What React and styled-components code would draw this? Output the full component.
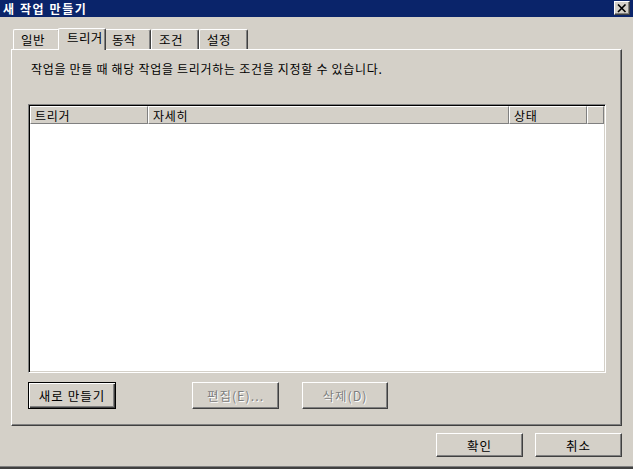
import React from "react";
import styled, { createGlobalStyle } from "styled-components";

const GlobalStyle = createGlobalStyle`
  html, body {
    margin: 0;
    padding: 0;
    background: #d4d0c8;
  }
  * {
    box-sizing: border-box;
  }
`;

const FONT = `"Noto Sans CJK KR", "DejaVu Sans", sans-serif`;

const Window = styled.div`
  width: 633px;
  height: 469px;
  background: #d4d0c8;
  display: flex;
  flex-direction: column;
  font-family: ${FONT};
  font-size: 12px;
  letter-spacing: 0.7px;
  color: #000;
  border-bottom: 2px solid #404040;
  box-shadow: inset 0 -1px 0 #808080;
  overflow: hidden;
`;

const TitleBar = styled.div`
  height: 17px;
  background: #0a246a;
  display: flex;
  align-items: center;
  justify-content: space-between;
  padding: 0 3px 1px 3px;
`;

const Title = styled.span`
  color: #fff;
  font-weight: bold;
  font-size: 12px;
  line-height: 15px;
  letter-spacing: 1.6px;
`;

const CloseButton = styled.div`
  width: 16px;
  height: 14px;
  background: #d4d0c8;
  border-top: 1px solid #fff;
  border-left: 1px solid #fff;
  border-right: 1px solid #404040;
  border-bottom: 1px solid #404040;
  box-shadow: inset -1px -1px 0 #808080;
  display: flex;
  align-items: center;
  justify-content: center;
`;

const TabStrip = styled.div`
  display: flex;
  align-items: flex-end;
  height: 22px;
  margin-top: 10px;
  padding-left: 13px;
  position: relative;
  z-index: 1;
`;

const Tab = styled.div`
  width: ${(p) => p.$w}px;
  height: ${(p) => (p.$active ? 22 : 20)}px;
  margin: 0 ${(p) => (p.$active ? -2 : 0)}px -${(p) => (p.$active ? 1 : 0)}px;
  background: #d4d0c8;
  border-top: 1px solid #fff;
  border-left: 1px solid #fff;
  border-right: 1px solid #404040;
  box-shadow: inset -1px 0 0 #808080;
  border-top-left-radius: 2px;
  border-top-right-radius: 2px;
  padding: ${(p) => (p.$active ? "1px 0 0 8px" : "2px 0 0 7px")};
  line-height: 16px;
  font-size: 12.5px;
  letter-spacing: 0.4px;
  white-space: nowrap;
  position: relative;
  z-index: ${(p) => (p.$active ? 2 : 1)};
`;

const Panel = styled.div`
  margin: 0 11px;
  height: 377px;
  border-top: 1px solid #fff;
  border-left: 1px solid #fff;
  border-right: 1px solid #404040;
  border-bottom: 1px solid #404040;
  box-shadow: inset -1px -1px 0 #808080;
  padding: 12px 0 0 16px;
  display: flex;
  flex-direction: column;
`;

const Description = styled.div`
  padding-left: 3px;
  line-height: 14px;
  height: 14px;
`;

const ListBox = styled.div`
  margin-top: 28px;
  width: 578px;
  height: 269px;
  background: #fff;
  border-top: 1px solid #808080;
  border-left: 1px solid #808080;
  border-right: 1px solid #fff;
  border-bottom: 1px solid #fff;
  box-shadow: inset 1px 1px 0 #000, inset -1px -1px 0 #d4d0c8;
  padding: 1px;
  display: flex;
  flex-direction: column;
`;

const HeaderRow = styled.div`
  display: flex;
  height: 18px;
  background: #d4d0c8;
`;

const HeaderCell = styled.div`
  width: ${(p) => p.$w}px;
  flex: ${(p) => (p.$grow ? 1 : "none")};
  height: 18px;
  border-top: 1px solid #fff;
  border-left: 1px solid #fff;
  border-right: 1px solid #808080;
  border-bottom: 1px solid #808080;
  padding: 1px 0 0 4px;
  line-height: 15px;
`;

const ButtonRow = styled.div`
  display: flex;
  margin-top: 9px;
`;

const Button = styled.div`
  width: ${(p) => p.$w}px;
  height: ${(p) => p.$h || 27}px;
  margin-left: ${(p) => p.$ml || 0}px;
  background: #d4d0c8;
  display: flex;
  align-items: center;
  justify-content: center;
  color: ${(p) => (p.$disabled ? "#808080" : "#000")};
  text-shadow: ${(p) => (p.$disabled ? "1px 1px 0 #fff" : "none")};
  font-size: 12.5px;
  letter-spacing: 1px;
  ${(p) =>
    p.$default
      ? `border: 1px solid #000; box-shadow: inset 1px 1px 0 #fff, inset -1px -1px 0 #404040, inset -2px -2px 0 #808080;`
      : `border-top: 1px solid #fff; border-left: 1px solid #fff; border-right: 1px solid #404040; border-bottom: 1px solid #404040; box-shadow: inset -1px -1px 0 #808080;`}
`;

const Footer = styled.div`
  display: flex;
  justify-content: flex-end;
  margin-top: 7px;
  padding-right: 11px;
  gap: 12px;
`;

export default function App() {
  return (
    <>
      <GlobalStyle />
      <Window>
        <TitleBar>
          <Title>새 작업 만들기</Title>
          <CloseButton>
            <svg width="10" height="9" viewBox="0 0 10 9">
              <path d="M1 0.5 L8.5 8 M8.5 0.5 L1 8" stroke="#000" strokeWidth="1.6" />
            </svg>
          </CloseButton>
        </TitleBar>
        <TabStrip>
          <Tab $w={47}>일반</Tab>
          <Tab $w={48} $active>트리거</Tab>
          <Tab $w={47}>동작</Tab>
          <Tab $w={48}>조건</Tab>
          <Tab $w={49}>설정</Tab>
        </TabStrip>
        <Panel>
          <Description>작업을 만들 때 해당 작업을 트리거하는 조건을 지정할 수 있습니다.</Description>
          <ListBox>
            <HeaderRow>
              <HeaderCell $w={118}>트리거</HeaderCell>
              <HeaderCell $w={361}>자세히</HeaderCell>
              <HeaderCell $w={78}>상태</HeaderCell>
              <HeaderCell $grow />
            </HeaderRow>
          </ListBox>
          <ButtonRow>
            <Button $w={88} $default>새로 만들기</Button>
            <Button $w={87} $ml={76} $disabled>편집(E)...</Button>
            <Button $w={86} $ml={23} $disabled>삭제(D)</Button>
          </ButtonRow>
        </Panel>
        <Footer>
          <Button $w={87} $h={24}>확인</Button>
          <Button $w={87} $h={24}>취소</Button>
        </Footer>
      </Window>
    </>
  );
}
